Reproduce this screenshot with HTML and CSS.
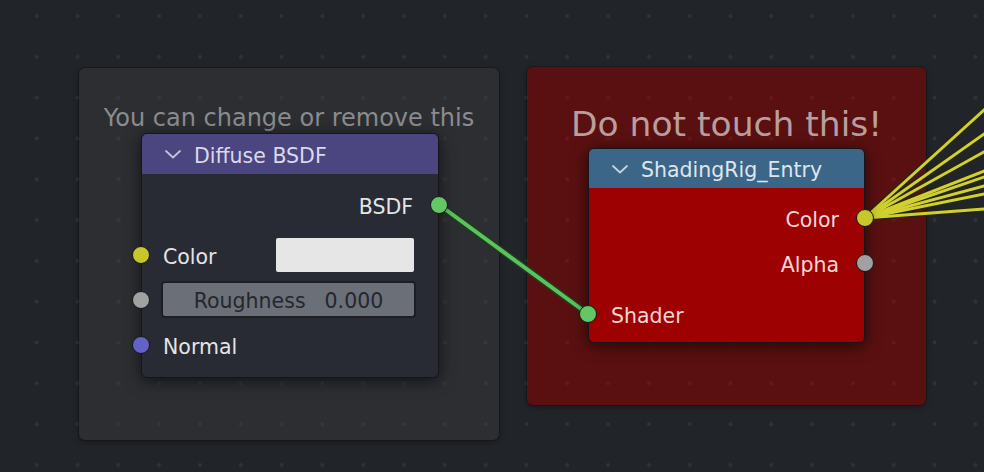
FILE: index.html
```html
<!DOCTYPE html>
<html>
<head>
<meta charset="utf-8">
<title>Node editor</title>
<link rel="stylesheet" href="styles.css">
</head>
<body>
<div class="canvas">
  <div class="frame frame-free">
    <div class="frame-label">You can change or remove this</div>
  </div>
  <div class="frame frame-locked">
    <div class="frame-label">Do not touch this!</div>
  </div>

  <svg class="wires" width="984" height="472" viewBox="0 0 984 472">
    <g class="wire-shade">
      <line x1="438" y1="204" x2="588" y2="314" stroke="#1f3d1f" stroke-width="7" stroke-linecap="round"/>
      <line x1="865" y1="218" x2="1000" y2="95.5" stroke="#26260c" stroke-width="5.6"/>
      <line x1="865" y1="218" x2="1000" y2="122.7" stroke="#26260c" stroke-width="5.6"/>
      <line x1="865" y1="218" x2="1000" y2="143" stroke="#26260c" stroke-width="5.6"/>
      <line x1="865" y1="218" x2="1000" y2="164.7" stroke="#26260c" stroke-width="5.6"/>
      <line x1="865" y1="218" x2="1000" y2="171.5" stroke="#26260c" stroke-width="5.6"/>
      <line x1="865" y1="218" x2="1000" y2="181.7" stroke="#26260c" stroke-width="5.6"/>
      <line x1="865" y1="218" x2="1000" y2="190.8" stroke="#26260c" stroke-width="5.6"/>
      <line x1="865" y1="218" x2="1000" y2="207.8" stroke="#26260c" stroke-width="5.6"/>
    </g>
    <g class="wire-core">
      <line x1="438" y1="204" x2="588" y2="314" stroke="#5cc25c" stroke-width="4" stroke-linecap="round"/>
      <line x1="865" y1="218" x2="1000" y2="95.5" stroke="#d0d032" stroke-width="3"/>
      <line x1="865" y1="218" x2="1000" y2="122.7" stroke="#d0d032" stroke-width="3"/>
      <line x1="865" y1="218" x2="1000" y2="143" stroke="#d0d032" stroke-width="3"/>
      <line x1="865" y1="218" x2="1000" y2="164.7" stroke="#d0d032" stroke-width="3"/>
      <line x1="865" y1="218" x2="1000" y2="171.5" stroke="#d0d032" stroke-width="3"/>
      <line x1="865" y1="218" x2="1000" y2="181.7" stroke="#d0d032" stroke-width="3"/>
      <line x1="865" y1="218" x2="1000" y2="190.8" stroke="#d0d032" stroke-width="3"/>
      <line x1="865" y1="218" x2="1000" y2="207.8" stroke="#d0d032" stroke-width="3"/>
    </g>
  </svg>

  <div class="node node-diffuse">
    <div class="node-header">
      <svg class="chevron" width="18" height="10" viewBox="0 0 18 10"><polyline points="2,2 9,8.5 16,2" fill="none" stroke="currentColor" stroke-width="1.8" stroke-linecap="round" stroke-linejoin="round"/></svg>
      <span class="node-title">Diffuse BSDF</span>
    </div>
    <div class="node-body">
      <div class="row out r-bsdf">
        <span class="label">BSDF</span>
        <span class="socket sock-shader"></span>
      </div>
      <div class="row in r-color">
        <span class="socket sock-color"></span>
        <span class="label">Color</span>
        <span class="swatch"></span>
      </div>
      <div class="row in r-rough">
        <span class="socket sock-value"></span>
        <div class="slider"><span class="label">Roughness</span><span class="label">0.000</span></div>
      </div>
      <div class="row in r-normal">
        <span class="socket sock-vector"></span>
        <span class="label">Normal</span>
      </div>
    </div>
  </div>

  <div class="node node-rig">
    <div class="node-header">
      <svg class="chevron" width="18" height="10" viewBox="0 0 18 10"><polyline points="2,2 9,8.5 16,2" fill="none" stroke="currentColor" stroke-width="1.8" stroke-linecap="round" stroke-linejoin="round"/></svg>
      <span class="node-title">ShadingRig_Entry</span>
    </div>
    <div class="node-body">
      <div class="row out r-rcolor">
        <span class="label">Color</span>
        <span class="socket sock-color"></span>
      </div>
      <div class="row out r-alpha">
        <span class="label">Alpha</span>
        <span class="socket sock-value"></span>
      </div>
      <div class="row in r-shader">
        <span class="socket sock-shader"></span>
        <span class="label">Shader</span>
      </div>
    </div>
  </div>
</div>
</body>
</html>
```

FILE: styles.css
```css
html, body {
  margin: 0;
  padding: 0;
}

body {
  width: 984px;
  height: 472px;
  overflow: hidden;
  background-color: #212429;
  background-image: radial-gradient(circle at center, #303339 1.7px, transparent 2.3px);
  background-size: 40.82px 40.82px;
  background-position: 16.3px -4.4px;
  font-family: "DejaVu Sans", "Liberation Sans", sans-serif;
}

.canvas {
  position: relative;
  width: 984px;
  height: 472px;
}

/* ---------- frames ---------- */
.frame {
  position: absolute;
  box-sizing: border-box;
  border-radius: 6px;
  text-align: center;
  background-size: 40.82px 40.82px;
  background-position: 16.3px -4.4px;
  background-attachment: fixed;
}

.frame-free {
  left: 79px;
  top: 68px;
  width: 420px;
  height: 372px;
  background-color: #2c2e32;
  background-image: radial-gradient(circle at center, #35373c 1.7px, transparent 2.3px);
  box-shadow: 0 0 0 1px rgba(0, 0, 0, 0.18), 0 2px 6px rgba(0, 0, 0, 0.35);
}

.frame-locked {
  left: 527px;
  top: 67px;
  width: 399px;
  height: 338px;
  background-color: #5a1010;
  background-image: radial-gradient(circle at center, #661919 1.7px, transparent 2.3px);
  box-shadow: 0 0 0 1px rgba(0, 0, 0, 0.2), 0 2px 6px rgba(0, 0, 0, 0.35);
}

.frame-label {
  white-space: nowrap;
}

.frame-free .frame-label {
  margin-top: 38px;
  font-size: 24px;
  line-height: 24px;
  color: #8b8c8f;
}

.frame-locked .frame-label {
  margin-top: 40px;
  font-size: 34.5px;
  line-height: 35px;
  color: #b89e9e;
}

/* ---------- wires ---------- */
.wires {
  position: absolute;
  left: 0;
  top: 0;
  pointer-events: none;
}

/* ---------- nodes ---------- */
.node {
  position: absolute;
  box-sizing: border-box;
  border: 1px solid #14161a;
  border-radius: 6px;
  font-size: 20.5px;
  box-shadow: 0 3px 16px rgba(0, 0, 0, 0.6);
}

.node-diffuse {
  left: 141px;
  top: 133px;
  width: 298px;
  background: #282b34;
  color: #e4e4e6;
}

.node-rig {
  left: 588px;
  top: 148px;
  width: 277px;
  background: #9e0101;
  color: #f3d6d6;
}

.node-header {
  display: flex;
  align-items: center;
  gap: 12px;
  height: 40px;
  padding-left: 22px;
  border-radius: 5px 5px 0 0;
}

.node-diffuse .node-header {
  background: #4b4580;
  color: #dcd8ea;
}

.node-rig .node-header {
  height: 39px;
  background: #3b6688;
  color: #dde6ee;
}

.chevron {
  flex: none;
  opacity: 0.85;
}

.node-title {
  padding-top: 4px;
  line-height: 1;
  white-space: nowrap;
}

.node-body {
  display: flex;
  flex-direction: column;
}

.node-diffuse .node-body {
  padding: 16px 0 17px;
}

.node-rig .node-body {
  padding: 15px 0 13px;
}

.row {
  position: relative;
  display: flex;
  align-items: center;
  height: 30px;
  padding: 0 25px 0 21px;
}

.row.out {
  justify-content: flex-end;
}

.label {
  padding-top: 4px;
  line-height: 1;
  white-space: nowrap;
}

.r-color {
  height: 34px;
  margin-top: 18px;
  padding-right: 24px;
}

.r-rough {
  height: 37px;
  margin-top: 9px;
  padding: 0 22px 0 19px;
}

.r-normal {
  margin-top: 12px;
}

.r-alpha {
  margin-top: 15px;
}

.r-shader {
  margin-top: 21px;
  padding-left: 22px;
}

.swatch {
  margin-left: auto;
  width: 138px;
  height: 34px;
  border-radius: 2px;
  background: #e6e6e6;
}

.slider {
  flex: 1;
  box-sizing: border-box;
  height: 37px;
  display: flex;
  align-items: center;
  justify-content: center;
  gap: 19px;
  border: 2px solid #1c1e24;
  border-radius: 4px;
  background: #6b6f78;
  color: #25272c;
}

/* ---------- sockets ---------- */
.socket {
  position: absolute;
  top: 50%;
  box-sizing: border-box;
  width: 18px;
  height: 18px;
  margin-top: -9px;
  border-radius: 50%;
  border: 1.7px solid #16171a;
}

.row.in .socket {
  left: -10.5px;
}

.row.out .socket {
  right: -10px;
}

.node-rig .row.in .socket {
  left: -10px;
}

.sock-shader { background: #63c763; }
.sock-color  { background: #c7c729; }
.sock-value  { background: #a1a1a1; }
.sock-vector { background: #6363c7; }
```
